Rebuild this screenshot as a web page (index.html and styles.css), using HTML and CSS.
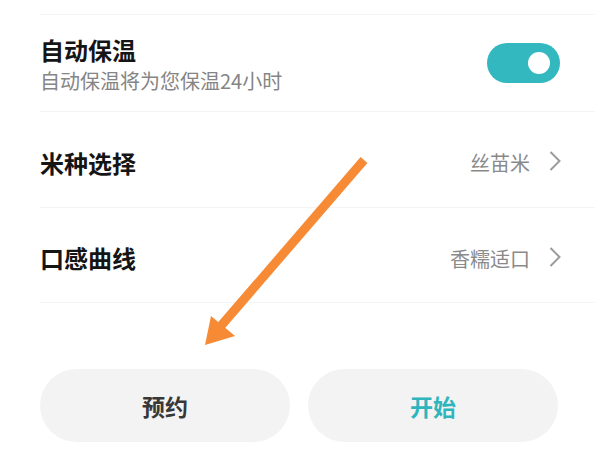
FILE: index.html
```html
<!DOCTYPE html>
<html>
<head>
<meta charset="utf-8">
<link rel="stylesheet" href="styles.css">
</head>
<body>
 <div class="settings">
   <div class="row row-first">
     <div class="row-text">
       <div class="title">自动保温</div>
       <div class="subtitle">自动保温将为您保温24小时</div>
     </div>
     <div class="toggle on"><span class="knob"></span></div>
   </div>

   <div class="row">
     <div class="title">米种选择</div>
     <div class="value">
       丝苗米
       <svg class="chevron" width="12" height="20" viewBox="0 0 12 20"><polyline points="1.5,1 10.5,10 1.5,19" fill="none" stroke="#9b9b9b" stroke-width="2"/></svg>
     </div>
   </div>

   <div class="row row-last">
     <div class="title">口感曲线</div>
     <div class="value">
       香糯适口
       <svg class="chevron" width="12" height="20" viewBox="0 0 12 20"><polyline points="1.5,1 10.5,10 1.5,19" fill="none" stroke="#9b9b9b" stroke-width="2"/></svg>
     </div>
   </div>
 </div>

 <div class="actions">
   <button class="btn">预约</button>
   <button class="btn btn-start">开始</button>
 </div>

 <!-- annotation arrow drawn over the screenshot -->
 <svg class="arrow" width="600" height="450" viewBox="0 0 600 450">
   <line x1="364" y1="160" x2="220" y2="327" stroke="#f68a35" stroke-width="9"/>
   <polygon points="205,345 211,316 235,336" fill="#f68a35"/>
 </svg>
</body>
</html>
```

FILE: styles.css
```css
/* Base */
body {
 margin: 0;
 padding-top: 14px;
 background: #fff;
 font-family: "Noto Sans CJK SC", "Noto Sans", sans-serif;
 position: relative;
 width: 600px;
 height: 450px;
 overflow: hidden;
}

/* Settings list */
.settings {
 margin-left: 40px;
 margin-right: 5px;
}

.row {
 box-sizing: border-box;
 height: 96px;
 padding-top: 6px;
 padding-right: 34px;
 border-top: 1px solid #f4f4f4;
 display: flex;
 align-items: center;
 justify-content: space-between;
}

.row-first {
 height: 97px;
 padding-top: 0;
 padding-right: 35px;
}

.row-first .row-text {
 align-self: flex-start;
 padding-top: 19px;
}

.row-last {
 border-bottom: 1px solid #f4f4f4;
}

.title {
 font-size: 24px;
 font-weight: 700;
 color: #151515;
 line-height: 32px;
}

.subtitle {
 font-size: 20px;
 color: #858585;
 line-height: 30px;
}

.value {
 display: flex;
 align-items: center;
 gap: 19px;
 font-size: 20px;
 color: #8a8a8a;
}

.chevron {
 display: block;
 margin-top: -3px;
}

/* Switch */
.toggle {
 width: 73px;
 height: 40px;
 border-radius: 20px;
 background: #33b8c0;
 position: relative;
}

.toggle .knob {
 position: absolute;
 top: 9px;
 right: 10px;
 width: 22px;
 height: 22px;
 border-radius: 50%;
 background: #fff;
}

/* Bottom buttons */
.actions {
 display: flex;
 gap: 18px;
 margin: 66px 0 0 40px;
}

.btn {
 width: 250px;
 height: 73px;
 border: none;
 border-radius: 37px;
 background: #f3f3f3;
 font-family: inherit;
 font-size: 23px;
 font-weight: 700;
 color: #383838;
 padding: 0;
}

.btn-start {
 color: #2fb5bd;
}

/* Overlay */
.arrow {
 position: absolute;
 top: 0;
 left: 0;
 pointer-events: none;
}
```
